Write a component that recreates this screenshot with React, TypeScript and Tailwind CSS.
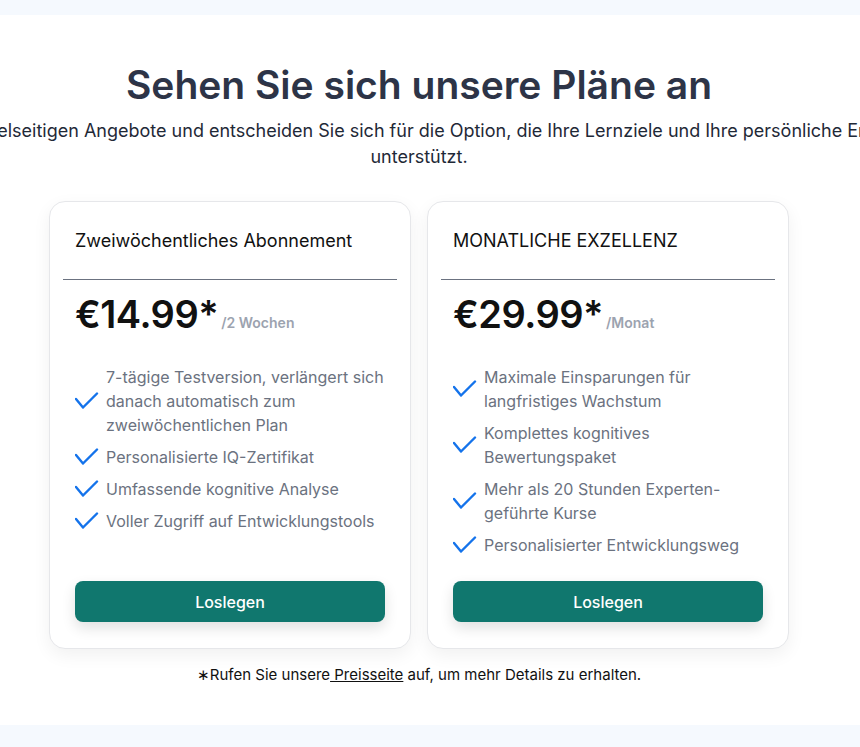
import React from "react";

type Plan = {
  title: string;
  price: string;
  period: string;
  features: string[];
};

const plans: Plan[] = [
  {
    title: "Zweiwöchentliches Abonnement",
    price: "€14.99*",
    period: "/2 Wochen",
    features: [
      "7-tägige Testversion, verlängert sich danach automatisch zum zweiwöchentlichen Plan",
      "Personalisierte IQ-Zertifikat",
      "Umfassende kognitive Analyse",
      "Voller Zugriff auf Entwicklungstools",
    ],
  },
  {
    title: "MONATLICHE EXZELLENZ",
    price: "€29.99*",
    period: "/Monat",
    features: [
      "Maximale Einsparungen für langfristiges Wachstum",
      "Komplettes kognitives Bewertungspaket",
      "Mehr als 20 Stunden Experten-geführte Kurse",
      "Personalisierter Entwicklungsweg",
    ],
  },
];

function CheckIcon() {
  return (
    <svg width="24" height="18" viewBox="0 0 24 18" className="shrink-0" fill="none">
      <polyline
        points="1,7 8,15.5 22,1.5"
        stroke="#1473eb"
        strokeWidth="2.4"
        strokeLinecap="round"
        strokeLinejoin="round"
      />
    </svg>
  );
}

function PlanCard({ plan }: { plan: Plan }) {
  return (
    <div className="w-[362px] bg-white rounded-2xl border border-[#e6e7ea] shadow-[0_6px_18px_rgba(0,0,0,0.06)] px-[13px] pt-[26px] pb-[26px] flex flex-col">
      <h3 className="pl-[12px] pr-[13px] text-[18px] leading-[26px] text-[#111]">{plan.title}</h3>
      <div className="mt-[25px] h-px bg-[#6b7280]" />

      <div className="pl-[12px] pr-[13px] mt-[9px] flex items-baseline gap-[3px]">
        <span className="text-[38px] leading-[50px] font-semibold tracking-[-0.5px] text-[#111]">{plan.price}</span>
        <span className="text-[14px] font-semibold text-[#9ca3af]">{plan.period}</span>
      </div>

      <ul className="mt-[26px] mb-6 pl-[12px] pr-[8px] flex flex-col gap-2">
        {plan.features.map((f) => (
          <li key={f} className="flex items-center gap-[7px]">
            <CheckIcon />
            <span className="text-[16px] leading-6 text-[#6b7280]">{f}</span>
          </li>
        ))}
      </ul>

      <button
        type="button"
        className="mt-auto mx-[12px] h-[41px] rounded-lg bg-[#10776e] text-white text-[16px] font-medium shadow-[0_6px_14px_rgba(0,0,0,0.12)]"
      >
        Loslegen
      </button>
    </div>
  );
}

function App() {
  return (
    <div className="min-h-screen overflow-x-hidden bg-white font-['Inter',sans-serif]">
      <div className="h-[15px] bg-[#f5f9fe]" />

      <section className="pt-[46px] pb-[40px]">
        <div className="w-[838px] flex flex-col items-center">
          <h2 className="text-[39px] leading-[48px] font-semibold text-[#2d3447]">
            Sehen Sie sich unsere Pläne an
          </h2>
          <p className="mt-[9px] w-[1280px] shrink-0 text-center text-[18px] leading-[26px] text-[#1f2937]">
            Entdecken Sie unsere vielseitigen Angebote und entscheiden Sie sich für die Option, die Ihre Lernziele und Ihre persönliche Entwicklung am besten unterstützt.
          </p>

          <div className="mt-[31px] flex gap-4">
            {plans.map((p) => (
              <PlanCard key={p.title} plan={p} />
            ))}
          </div>

          <p className="mt-[16px] text-[15px] leading-5 text-[#111]">
            ∗Rufen Sie unsere
            <a href="#" className="underline"> Preisseite</a> auf, um mehr Details zu erhalten.
          </p>
        </div>
      </section>

      <div className="h-[40px] bg-[#f5f9fe]" />
    </div>
  );
}

export default App;
